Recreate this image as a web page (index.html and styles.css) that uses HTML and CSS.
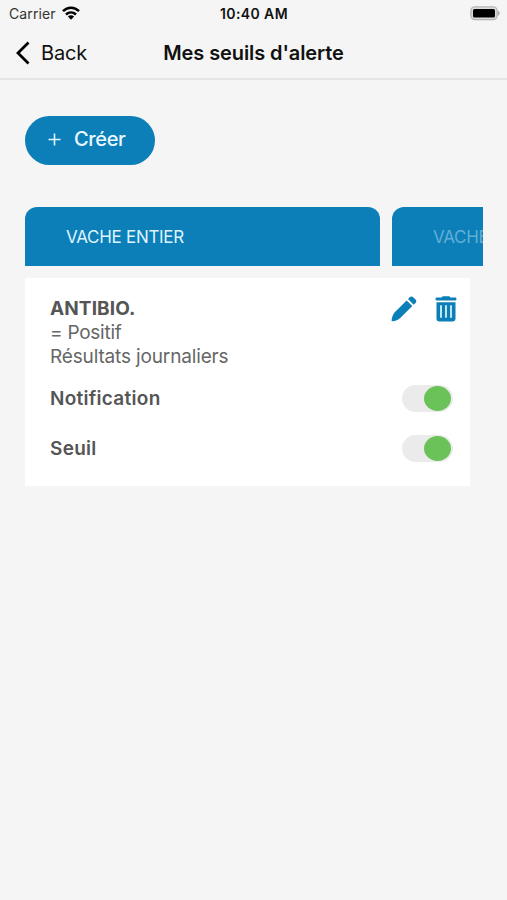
FILE: index.html
```html
<!DOCTYPE html>
<html lang="fr">
<head>
<meta charset="utf-8">
<title>Mes seuils d'alerte</title>
<link rel="stylesheet" href="styles.css">
</head>
<body>
<header class="header">
  <div class="status">
    <div class="carrier"><span>Carrier</span>
      <svg class="wifi" width="18" height="14" viewBox="0 0 18 14"><g fill="none" stroke="#000" stroke-width="2.5"><path d="M1 5.2C5.6.5 12.4.5 17 5.2"/><path d="M4 8.5c2.900-2.800 7.100-2.800 10 0"/></g><path d="M5.900 10.500c1.800-1.700 4.400-1.700 6.200 0L9 13.700z"/></svg>
    </div>
    <span class="time">10:40 AM</span>
    <svg class="battery" width="30" height="15" viewBox="0 0 30 15"><rect x=".9" y=".9" width="26.200" height="12.700" rx="4" fill="#ddd" stroke="#b5b5b5" stroke-width="1.400"/><path d="M28 4.800c2.200 1 2.200 4 0 5z" fill="#aaa"/><rect x="3" y="3" width="22" height="8.600" rx="1.500"/></svg>
  </div>
  <nav class="nav">
    <a class="back"><svg width="14" height="24" viewBox="0 0 14 24"><path d="M12.500 1.500 2 12l10.500 10.500" fill="none" stroke="#000" stroke-width="2.800"/></svg><span>Back</span></a>
    <h1 class="title">Mes seuils d'alerte</h1>
  </nav>
</header>
<main class="content">
  <button class="create"><svg width="13" height="13" viewBox="0 0 13 13"><path d="M6.500.5v12M.5 6.500h12" stroke="#e2f5ff" stroke-width="1.600"/></svg><span>Créer</span></button>
  <div class="tabs">
    <div class="tab"><span>VACHE ENTIER</span></div>
    <div class="tab tab-next"><span>VACHE ENTIER</span></div>
  </div>
  <section class="card">
    <div class="summary">
      <div class="details">
        <h2 class="name">ANTIBIO.</h2>
        <p class="condition">= Positif</p>
        <p class="period">Résultats journaliers</p>
      </div>
      <div class="actions">
        <svg width="26" height="26" viewBox="0 0 26 26" fill="#0c7fb8"><path d="m15.600 4.400 5.700 5.700L9.500 21.800c-2.300 2.200-5 3.300-8 3.500-.7 0-1-.4-.9-1 .3-3 1.300-5.800 3.400-8.200z"/><path d="m17 3 1.700-1.700c1-1 2.500-1 3.500 0l2.300 2.300c1 1 1 2.500 0 3.500l-1.800 1.600z"/></svg>
        <svg width="22" height="26" viewBox="0 0 22 26"><path fill="#0c7fb8" d="M6.500 1.500 7.700.3h6.600l1.200 1.200h5c1.300 0 1.300 3 0 3h-19c-1.300 0-1.300-3 0-3zM1.500 6.200h19v16.300a3 3 0 0 1-3 3h-13a3 3 0 0 1-3-3z"/><path d="M6 9.300v12.500M11 9.300v12.500M16 9.300v12.500" stroke="#e0f7ff" stroke-width="1.700"/></svg>
      </div>
    </div>
    <div class="setting"><span>Notification</span><span class="switch"></span></div>
    <div class="setting"><span>Seuil</span><span class="switch"></span></div>
  </section>
</main>
</body>
</html>
```
FILE: styles.css
```css
* { box-sizing: border-box; }
body { margin: 0; height: 900px; overflow: hidden; background: #f5f5f5; color: #111; font-family: Inter, "Liberation Sans", sans-serif; }
h1, h2, p { margin: 0; }
svg { display: block; flex: none; }
.header { height: 80px; border-bottom: 2px solid #e5e5e5; }
.status { display: grid; grid-template-columns: 1fr auto 1fr; height: 28px; padding: 0 7px 0 9px; align-items: center; font-size: 14px; line-height: 28px; }
.carrier { display: flex; gap: 6px; align-items: center; color: #333; letter-spacing: .1px; }
.wifi { margin-top: -2px; }
.time { margin-left: -1px; font-weight: 600; letter-spacing: .4px; }
.battery { justify-self: end; margin-top: -2px; }
.nav { display: grid; grid-template-columns: 1fr auto 1fr; height: 49px; padding: 0 16px; align-items: center; }
.back { display: flex; gap: 11px; align-items: center; font-size: 20px; letter-spacing: -.2px; }
.title { font-size: 20px; line-height: 28px; font-weight: 600; letter-spacing: -.1px; }
.content { padding: 36px 24.500px 36px 25px; }
.create { display: flex; width: 130px; height: 49px; margin: 0; padding: 0 0 3px 23px; gap: 13px; align-items: center; border: 0; border-radius: 25px; background: #0c7fb8; color: #e9f8ff; font: 500 20px Inter, sans-serif; letter-spacing: -.35px; }
.tabs { display: flex; gap: 12px; height: 59px; margin-top: 42px; overflow: hidden; }
.tab { flex: 0 0 355px; padding-left: 41px; border-radius: 12px 12px 0 0; background: #0c7fb8; color: #dff4ff; font-size: 17px; line-height: 60px; letter-spacing: -.3px; }
.tab-next { color: #60afd6; white-space: nowrap; }
.card { width: 445px; height: 208px; margin-top: 12px; padding: 19px 17px 0 25px; background: #fff; color: #555; font-size: 19px; }
.summary { display: flex; justify-content: space-between; height: 76px; }
.details { line-height: 23.800px; }
.name { font-size: 19px; line-height: 24px; font-weight: 700; letter-spacing: .1px; }
.condition, .period { color: #666; letter-spacing: -.15px; }
.condition { letter-spacing: -.25px; }
.actions { display: flex; gap: 18px; margin: -1px -4px 0 0; }
.setting { display: flex; align-items: center; justify-content: space-between; height: 50px; font-weight: 600; letter-spacing: .28px; }
.switch { width: 51px; height: 27px; padding: 1px 2px 1px 1px; border-radius: 14px; background: #ebebeb; }
.switch::after { display: block; width: 27px; height: 25px; margin-left: auto; border-radius: 50%; background: #6bc259; content: ""; }
```
